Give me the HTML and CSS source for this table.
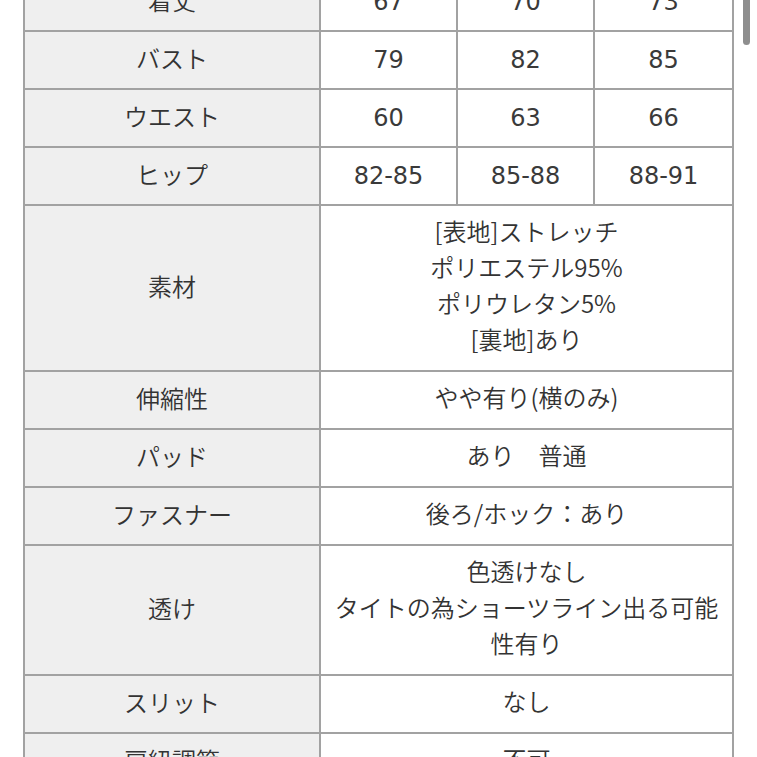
FILE: index.html
```html
<!DOCTYPE html>
<html lang="ja">
<head>
<meta charset="utf-8">
<title>サイズ表</title>
<link rel="stylesheet" href="styles.css">
</head>
<body>
<div class="page">
  <table class="spec">
    <colgroup>
      <col class="c-head">
      <col class="c-val">
      <col class="c-val">
      <col class="c-val3">
    </colgroup>
    <tbody>
      <tr><th>着丈</th><td class="num">67</td><td class="num">70</td><td class="num">73</td></tr>
      <tr><th>バスト</th><td class="num">79</td><td class="num">82</td><td class="num">85</td></tr>
      <tr><th>ウエスト</th><td class="num">60</td><td class="num">63</td><td class="num">66</td></tr>
      <tr><th>ヒップ</th><td class="num">82-85</td><td class="num">85-88</td><td class="num">88-91</td></tr>
      <tr><th>素材</th><td colspan="3">[表地]ストレッチ<br>ポリエステル95%<br>ポリウレタン5%<br>[裏地]あり</td></tr>
      <tr><th>伸縮性</th><td colspan="3">やや有り(横のみ)</td></tr>
      <tr><th>パッド</th><td colspan="3">あり　普通</td></tr>
      <tr><th>ファスナー</th><td colspan="3">後ろ/ホック：あり</td></tr>
      <tr><th>透け</th><td colspan="3">色透けなし<br>タイトの為ショーツライン出る可能性有り</td></tr>
      <tr><th>スリット</th><td colspan="3">なし</td></tr>
      <tr><th>肩紐調節</th><td colspan="3">不可</td></tr>
    </tbody>
  </table>
  <div class="scrollbar"></div>
</div>
</body>
</html>
```
FILE: styles.css
```css
html, body {
  margin: 0;
  padding: 0;
  background: #ffffff;
  overflow: hidden;
}

.page {
  position: relative;
  width: 757px;
  height: 757px;
  overflow: hidden;
  padding-left: 23px;
  box-sizing: border-box;
}

.spec {
  margin-top: -28px;
  border-collapse: collapse;
  table-layout: fixed;
  width: 709px;
  font-family: "Noto Sans CJK JP", sans-serif;
  font-size: 24px;
  line-height: 36px;
  color: #333333;
}

.c-head { width: 296px; }
.c-val { width: 137px; }
.c-val3 { width: 139px; }

.spec th,
.spec td {
  border: 2px solid #a2a2a2;
  padding: 10px 10px;
  text-align: center;
  vertical-align: middle;
  font-weight: 350;
}

.spec th {
  padding-top: 8px;
  padding-bottom: 12px;
  background: #efefef;
}

.spec td {
  background: #ffffff;
  padding-top: 7px;
  padding-bottom: 13px;
}

.spec td.num {
  padding-top: 10px;
  padding-bottom: 10px;
  font-family: "DejaVu Sans", sans-serif;
  font-weight: 400;
  color: #3a3a3a;
}

.scrollbar {
  position: absolute;
  top: -6px;
  left: 743px;
  width: 7px;
  height: 51px;
  border-radius: 4px;
  background: #8e8e8e;
}
```
